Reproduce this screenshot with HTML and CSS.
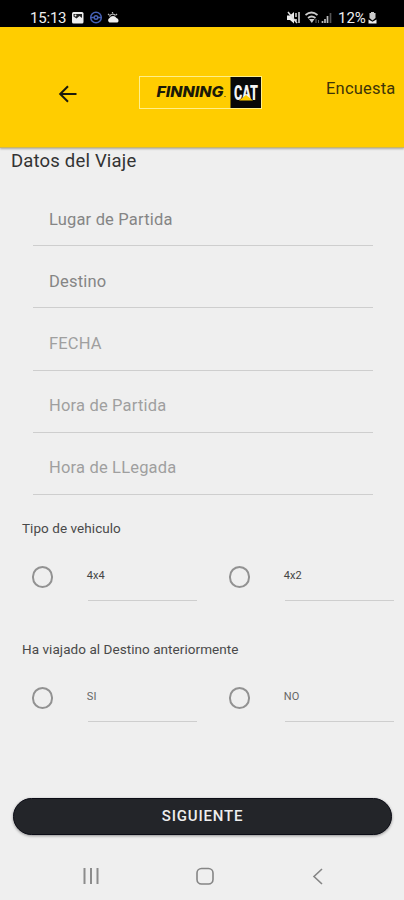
FILE: index.html
```
<!DOCTYPE html>
<html lang="es">
<head>
<meta charset="utf-8">
<title>Encuesta</title>
<link rel="stylesheet" href="styles.css">
</head>
<body>
<div class="status">
  <span class="time">15:13</span>
  <svg class="left-icons" width="49" height="14" viewBox="0 0 49 14">
    <rect x="1" y="1" width="11.5" height="11.5" rx="1.500" fill="#eee"/>
    <path d="M2.500 3h8.500v4l-2.500-2-3 2.500-3-2z" fill="#222"/>
    <circle cx="4.500" cy="4.500" r="1" fill="#eee"/>
    <circle cx="25" cy="6.500" r="5.300" fill="none" stroke="#4660b4" stroke-width="1.500"/>
    <path d="M19.500 6.500h3.500M27 6.500h3.500" stroke="#4660b4" stroke-width="1.500"/>
    <circle cx="25" cy="6.500" r="1.800" fill="none" stroke="#4660b4" stroke-width="1.400"/>
    <path d="M38.500 11.500a2.500 2.500 0 0 1 0-4.500 4 4 0 0 1 7 0 2.500 2.500 0 0 1 1 4.500z" fill="#eee"/>
    <path d="M38.500 5.500a3.500 3.500 0 0 1 6-1M41.500 1v1.300M37 3l1.300 1M46 3l-1 1" fill="none" stroke="#bbb" stroke-width="1.200"/>
  </svg>
  <svg class="right-icons" width="47" height="14" viewBox="0 0 47 14">
    <path d="M0 4.500h3l4-3.500v11.500L3 9H0z" fill="#eee"/>
    <path d="M1 1l9 11M9 2v4M12 1v11M9 8v2" stroke="#ddd" stroke-width="1.500"/>
    <path d="M18.500 4q6-5 12 0M21 7q3.500-3 7.500 0" fill="none" stroke="#ccc" stroke-width="1.700"/>
    <path d="M22 8h5.500l-2.700 4z" fill="#ccc"/>
    <path d="M29 8v4M31.500 12V9" stroke="#666"/>
    <path d="M35.500 12v-2M38 12V8M40.500 12V5" stroke="#bbb" stroke-width="1.700"/>
    <path d="M43.500 12V2" stroke="#555" stroke-width="1.700"/>
  </svg>
  <span class="percent">12%</span>
  <svg width="9" height="13" viewBox="0 0 9 13">
    <path d="M3 1h3v1h1.500v5L4.500 9.500 1.500 7V2H3z" fill="#ccc"/>
    <path d="M.5 8.500l4 2.300 4-2.300v4h-8z" fill="#eee"/>
  </svg>
</div>
<header class="header">
  <svg class="back" width="20" height="18" viewBox="0 0 20 18">
    <path d="M18.500 9H2.500M10 1.200L2.200 9l7.800 7.800" fill="none" stroke="#1c1a0c" stroke-width="2"/>
  </svg>
  <svg class="logo" width="130" height="36" viewBox="0 0 130 36">
    <rect x="1.500" y="2.500" width="122" height="32" fill="none" stroke="#ffef8a"/>
    <rect x="92.500" y="3" width="30.500" height="31" fill="#080808"/>
    <text class="finning" x="18.500" y="23.300" textLength="67" lengthAdjust="spacingAndGlyphs">FINNING</text>
    <rect x="86.500" y="22" width="1" height="1" fill="#222"/>
    <text class="cat" x="96" y="25.500" textLength="24" lengthAdjust="spacingAndGlyphs">CAT</text>
    <path d="M101 26.500l7-5.500 7 5.500z" fill="#ffcd00"/>
  </svg>
  <span class="encuesta">Encuesta</span>
</header>
<main class="content">
  <h1 class="title">Datos del Viaje</h1>
  <div class="fields">
    <div class="field">Lugar de Partida</div>
    <div class="field">Destino</div>
    <div class="field light">FECHA</div>
    <div class="field light">Hora de Partida</div>
    <div class="field light">Hora de LLegada</div>
  </div>
  <section class="group">
    <h2 class="question">Tipo de vehiculo</h2>
    <div class="options">
      <div class="option"><span class="radio"></span><span class="label dark">4x4</span></div>
      <div class="option"><span class="radio"></span><span class="label dark">4x2</span></div>
    </div>
  </section>
  <section class="group">
    <h2 class="question">Ha viajado al Destino anteriormente</h2>
    <div class="options">
      <div class="option"><span class="radio"></span><span class="label">SI</span></div>
      <div class="option"><span class="radio"></span><span class="label">NO</span></div>
    </div>
  </section>
  <div class="next">SIGUIENTE</div>
</main>
<nav class="nav">
  <svg width="18" height="18" viewBox="0 0 18 18"><path d="M2.500 1v16M9 1v16M15.500 1v16" stroke="#8c8c8c" stroke-width="2"/></svg>
  <svg width="18" height="18" viewBox="0 0 18 18"><rect x="1" y="1.500" width="16" height="15.500" rx="4.500" fill="none" stroke="#858585" stroke-width="1.600"/></svg>
  <svg width="18" height="18" viewBox="0 0 18 18"><path d="M13 2L5 9.500l8 7.500" fill="none" stroke="#858585" stroke-width="1.600"/></svg>
</nav>
</body>
</html>
```
FILE: styles.css
```
* { box-sizing: border-box; }
body {
  margin: 0;
  width: 404px;
  height: 900px;
  overflow: hidden;
  display: flex;
  flex-direction: column;
  background: #efefef;
  font-family: Roboto, "Liberation Sans", sans-serif;
  color: #333;
}
svg { display: block; flex: none; }
.status {
  height: 27px;
  background: #000;
  color: #eee;
  display: flex;
  align-items: center;
  padding: 8px 27px 0 30px;
  font-size: 15px;
  line-height: 18px;
}
.time { width: 41px; letter-spacing: -0.2px; }
.right-icons { margin-left: auto; }
.percent { width: 30px; margin-left: 4px; font-size: 15px; }
.header {
  height: 121px;
  background: #ffcd00;
  border-bottom: 1px solid #cdb75d;
  box-shadow: 0 1px 2px rgba(0, 0, 0, .3);
  display: flex;
  align-items: flex-start;
}
.back { margin: 58px 0 0 58px; }
.logo { margin: 47px 0 0 60px; overflow: visible; }
.finning { font: italic 800 14px Inter, Roboto, sans-serif; fill: #1b1a08; }
.cat { font: 900 20px Roboto, sans-serif; fill: #f4f4f4; }
.encuesta {
  margin: 52px 0 0 58px;
  font-size: 16.5px;
  line-height: 20px;
  letter-spacing: .2px;
  color: #3e3408;
}
.content { flex: 1; }
.title {
  margin: 2px 0 0 11px;
  font-size: 18.5px;
  line-height: 22px;
  font-weight: 400;
  letter-spacing: .18px;
}
.fields { margin: 12px 31px 0 33px; }
.field {
  height: 62.2px;
  padding: 23.5px 16px 0;
  border-bottom: 1px solid #cecece;
  font-size: 16.5px;
  line-height: 24px;
  letter-spacing: .18px;
  color: #858585;
}
.light { color: #9f9f9f; }
.group { height: 121px; }
.question {
  margin: 0;
  padding: 24px 0 0 22px;
  font-size: 13.5px;
  line-height: 18px;
  font-weight: 400;
  letter-spacing: .06px;
  color: #494949;
}
.options {
  display: grid;
  grid-template-columns: 197px 197px;
  margin-top: 27px;
}
.option { display: flex; padding-left: 31.5px; }
.radio {
  width: 22px;
  height: 22px;
  margin-top: 2px;
  border: 2px solid #929292;
  border-radius: 50%;
}
.label {
  width: 110px;
  height: 37px;
  margin-left: 34.5px;
  padding-top: 5px;
  border-bottom: 1px solid #cecece;
  font-size: 11px;
  line-height: 14px;
  color: #666;
  text-indent: -1px;
}
.dark { color: #444; }
.next {
  width: 379px;
  height: 37px;
  margin: 61px 0 0 13px;
  border: 1px solid #0b0c16;
  border-radius: 19px;
  background: #232529;
  box-shadow: 0 1px 3px rgba(0, 0, 0, .4);
  color: #eee;
  font-size: 15px;
  font-weight: 500;
  letter-spacing: .8px;
  line-height: 35px;
  text-align: center;
}
.nav {
  height: 48px;
  padding: 0 77px 0 82px;
  display: flex;
  justify-content: space-between;
  align-items: center;
}
```
